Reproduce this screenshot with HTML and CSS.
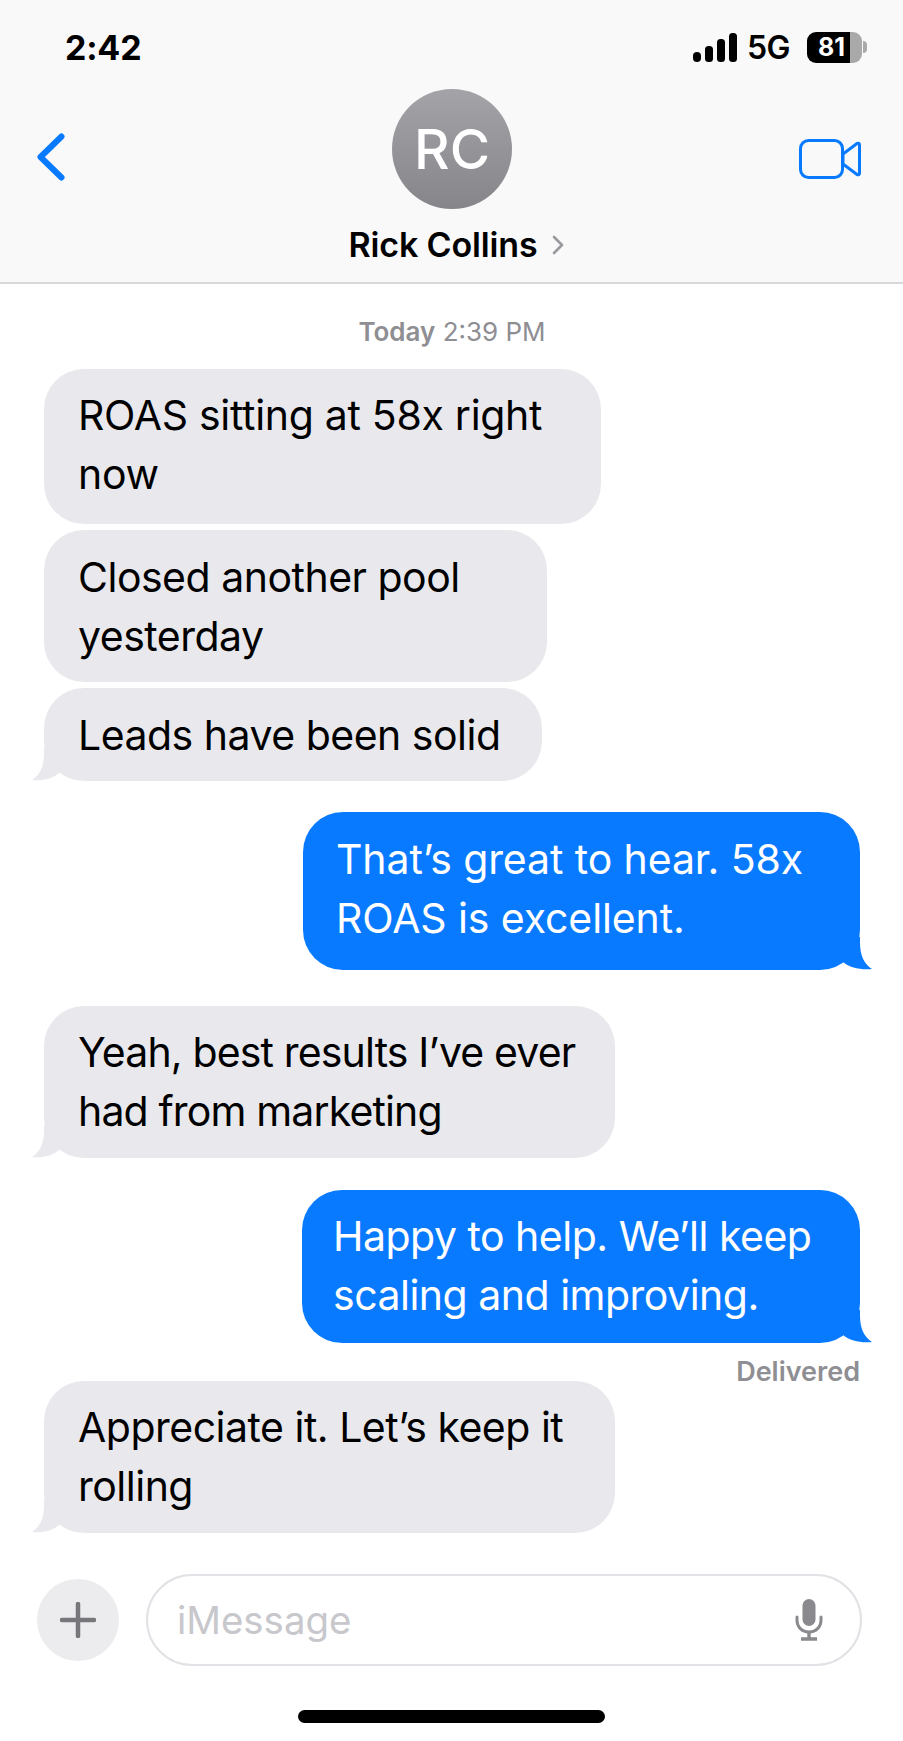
FILE: index.html
```html
<!DOCTYPE html>
<html lang="en">
<head>
  <meta charset="UTF-8">
  <meta name="viewport" content="width=device-width, initial-scale=1.0">
  <title>Rick Collins</title>
  <link rel="stylesheet" href="styles.css">
</head>
<body>
  <!-- status bar + contact -->
  <header class="top">
    <div class="status">
      <span class="clock">2:42</span>
      <div class="status-right">
        <svg class="signal" width="44" height="29" viewBox="0 0 44 29">
          <rect x="0" y="19" width="8" height="10" rx="4"/>
          <rect x="12" y="13" width="8" height="16" rx="3.5"/>
          <rect x="24" y="6" width="8" height="23" rx="3.5"/>
          <rect x="36" y="0" width="8" height="29" rx="3.5"/>
        </svg>
        <span class="network">5G</span>
        <div class="battery">
          <div class="battery-body"><span class="battery-level">81</span></div>
          <div class="battery-nub"></div>
        </div>
      </div>
    </div>
    <div class="nav">
      <svg class="back" width="30" height="48" viewBox="0 0 30 48">
        <path d="M25.5 3.5 L4.5 24 L25.5 44.5" fill="none" stroke="#087aff" stroke-width="6" stroke-linecap="round" stroke-linejoin="round"/>
      </svg>
      <div class="contact">
        <div class="avatar">RC</div>
        <div class="name">Rick Collins
          <svg width="12" height="20" viewBox="0 0 12 20">
            <path d="M2 2 L10 10 L2 18" fill="none" stroke="#9a9a9e" stroke-width="2.6" stroke-linecap="round" stroke-linejoin="round"/>
          </svg>
        </div>
      </div>
      <svg class="video" width="62" height="40" viewBox="0 0 62 40">
        <rect x="1.5" y="1.5" width="42" height="37" rx="8" fill="none" stroke="#087aff" stroke-width="3"/>
        <path d="M44 15 L58 4.5 Q60.5 3.5 60.5 6 L60.5 34 Q60.5 36.5 58 35.5 L44 25 Z" fill="none" stroke="#087aff" stroke-width="3" stroke-linejoin="round"/>
      </svg>
    </div>
  </header>

  <main class="thread">
    <div class="stamp"><b>Today</b> 2:39 PM</div>

    <div class="bubble in w-roas">ROAS sitting at 58x right<br>now</div>
    <div class="bubble in w-pool">Closed another pool<br>yesterday</div>
    <div class="bubble in w-leads">Leads have been solid
      <svg class="tail" width="40" height="34" viewBox="0 0 40 34"><path d="M12 0 V6 C12 18 8 27 0 32 C11 33 20 31 27 25 L40 0 Z"/></svg>
    </div>

    <div class="bubble out w-great">That’s great to hear. 58x<br>ROAS is excellent.
      <svg class="tail" width="40" height="34" viewBox="0 0 40 34"><path d="M28 0 V6 C28 18 32 27 40 32 C29 33 18 31 11 25 L0 0 Z"/></svg>
    </div>

    <div class="bubble in w-yeah">Yeah, best results I’ve ever<br>had from marketing
      <svg class="tail" width="40" height="34" viewBox="0 0 40 34"><path d="M12 0 V6 C12 18 8 27 0 32 C11 33 20 31 27 25 L40 0 Z"/></svg>
    </div>

    <div class="bubble out w-happy">Happy to help. We’ll keep<br>scaling and improving.
      <svg class="tail" width="40" height="34" viewBox="0 0 40 34"><path d="M28 0 V6 C28 18 32 27 40 32 C29 33 18 31 11 25 L0 0 Z"/></svg>
    </div>
    <div class="delivered">Delivered</div>

    <div class="bubble in w-thanks">Appreciate it. Let’s keep it<br>rolling
      <svg class="tail" width="40" height="34" viewBox="0 0 40 34"><path d="M12 0 V6 C12 18 8 27 0 32 C11 33 20 31 27 25 L40 0 Z"/></svg>
    </div>
  </main>

  <!-- input row -->
  <footer class="compose">
    <div class="plus">
      <svg width="36" height="36" viewBox="0 0 36 36">
        <path d="M18 2 V34 M2 18 H34" stroke="#77777b" stroke-width="4.5" stroke-linecap="round"/>
      </svg>
    </div>
    <div class="input">
      <span class="placeholder">iMessage</span>
      <svg width="28" height="42" viewBox="0 0 28 42">
        <rect x="7.5" y="0" width="13" height="27" rx="6.5" fill="#8a8a8e"/>
        <path d="M2 18 V21 C2 28 7 33 14 33 C21 33 26 28 26 21 V18" fill="none" stroke="#8a8a8e" stroke-width="3" stroke-linecap="round"/>
        <path d="M14 33 V39 M6 40 H22" stroke="#8a8a8e" stroke-width="3.4"/>
      </svg>
    </div>
  </footer>
  <div class="home-bar"></div>
</body>
</html>
```

FILE: styles.css
```css
* {
  box-sizing: border-box;
}

body {
  margin: 0;
  height: 1741px;
  overflow: hidden;
  background: #fff;
  color: #000;
  font-family: Inter, "Liberation Sans", sans-serif;
}

/* header */
.top {
  height: 284px;
  background: #f9f9f9;
  border-bottom: 2px solid #d8d8da;
}

.status {
  display: flex;
  justify-content: space-between;
  align-items: center;
  height: 32px;
  padding: 31px 36px 0 65px;
  box-sizing: content-box;
}

.clock {
  font-size: 34px;
  font-weight: 700;
  letter-spacing: -0.2px;
}

.status-right {
  display: flex;
  align-items: center;
}

.signal {
  fill: #000;
}

.network {
  margin-left: 10px;
  font-size: 32px;
  font-weight: 600;
  letter-spacing: -0.5px;
}

.battery {
  display: flex;
  align-items: center;
  margin-left: 17px;
}

.battery-body {
  width: 55px;
  height: 31px;
  border-radius: 9px;
  background: linear-gradient(to right, #000 43px, #a9a9a9 43px);
  overflow: hidden;
}

.battery-level {
  display: block;
  width: 43px;
  padding-left: 6px;
  color: #fff;
  font-size: 25px;
  font-weight: 700;
  line-height: 31px;
  text-align: center;
}

.battery-nub {
  width: 4px;
  height: 12px;
  margin-left: 1px;
  border-radius: 0 4px 4px 0;
  background: #a9a9a9;
}

.nav {
  display: grid;
  grid-template-columns: 1fr auto 1fr;
  padding: 26px 35px 0 36px;
}

.back {
  margin-top: 44px;
}

.contact {
  display: flex;
  flex-direction: column;
  align-items: center;
}

.avatar {
  display: flex;
  align-items: center;
  justify-content: center;
  width: 120px;
  height: 120px;
  border-radius: 50%;
  background: linear-gradient(#a3a3a8, #85858a);
  color: #fff;
  font-size: 55px;
  font-weight: 500;
}

.name {
  display: flex;
  align-items: center;
  gap: 15px;
  margin-top: 17px;
  margin-left: 9px;
  font-size: 34px;
  font-weight: 600;
  letter-spacing: -0.15px;
  line-height: 38px;
}

.video {
  justify-self: end;
  margin-top: 50px;
  margin-right: 7px;
}

/* messages */
.thread {
  display: flex;
  flex-direction: column;
  padding: 32px 43px 0 44px;
}

.stamp {
  margin-bottom: 21px;
  color: #8e8e93;
  font-size: 26px;
  line-height: 32px;
  text-align: center;
}

.stamp b {
  font-weight: 600;
}

.bubble {
  position: relative;
  padding: 17px 0 17px 34px;
  border-radius: 40px;
  font-size: 41px;
  letter-spacing: -0.5px;
  line-height: 59px;
}

.in {
  align-self: flex-start;
  background: #e9e9ed;
  fill: #e9e9ed;
  margin-bottom: 6px;
}

.out {
  align-self: flex-end;
  padding-left: 33px;
  background: #087aff;
  color: #fff;
  fill: #087aff;
}

.tail {
  position: absolute;
  bottom: -1px;
  left: -12px;
}

.out .tail {
  left: auto;
  right: -12px;
}

/* bubble widths and small per-message tweaks */
.w-roas { width: 557px; padding-bottom: 20px; letter-spacing: -0.3px; }
.w-pool { width: 503px; padding-top: 18px; padding-bottom: 16px; }
.w-leads { width: 498px; margin-bottom: 31px; padding-top: 18px; padding-bottom: 16px; }
.w-great { width: 557px; margin-bottom: 36px; padding-top: 18px; padding-bottom: 22px; letter-spacing: -0.1px; }
.w-yeah { width: 571px; margin-bottom: 32px; letter-spacing: -0.85px; }
.w-happy { width: 558px; padding-left: 31px; padding-bottom: 18px; }
.w-thanks { width: 571px; }

.delivered {
  align-self: flex-end;
  margin-top: 14px;
  margin-bottom: -6px;
  color: #8e8e93;
  font-size: 27px;
  font-weight: 600;
  line-height: 30px;
}

/* input row */
.compose {
  display: flex;
  align-items: center;
  gap: 27px;
  padding: 0 41px 0 37px;
  margin-top: 35px;
}

.plus {
  display: flex;
  align-items: center;
  justify-content: center;
  flex-shrink: 0;
  width: 82px;
  height: 82px;
  border-radius: 50%;
  background: #ececee;
}

.input {
  display: flex;
  align-items: center;
  justify-content: space-between;
  flex: 1;
  height: 92px;
  padding: 0 37px 0 29px;
  border: 2px solid #e2e2e6;
  border-radius: 46px;
}

.placeholder {
  color: #c7c7cc;
  font-size: 38.4px;
}

.home-bar {
  width: 307px;
  height: 13px;
  margin: 44px auto 0;
  border-radius: 7px;
  background: #000;
}
```
